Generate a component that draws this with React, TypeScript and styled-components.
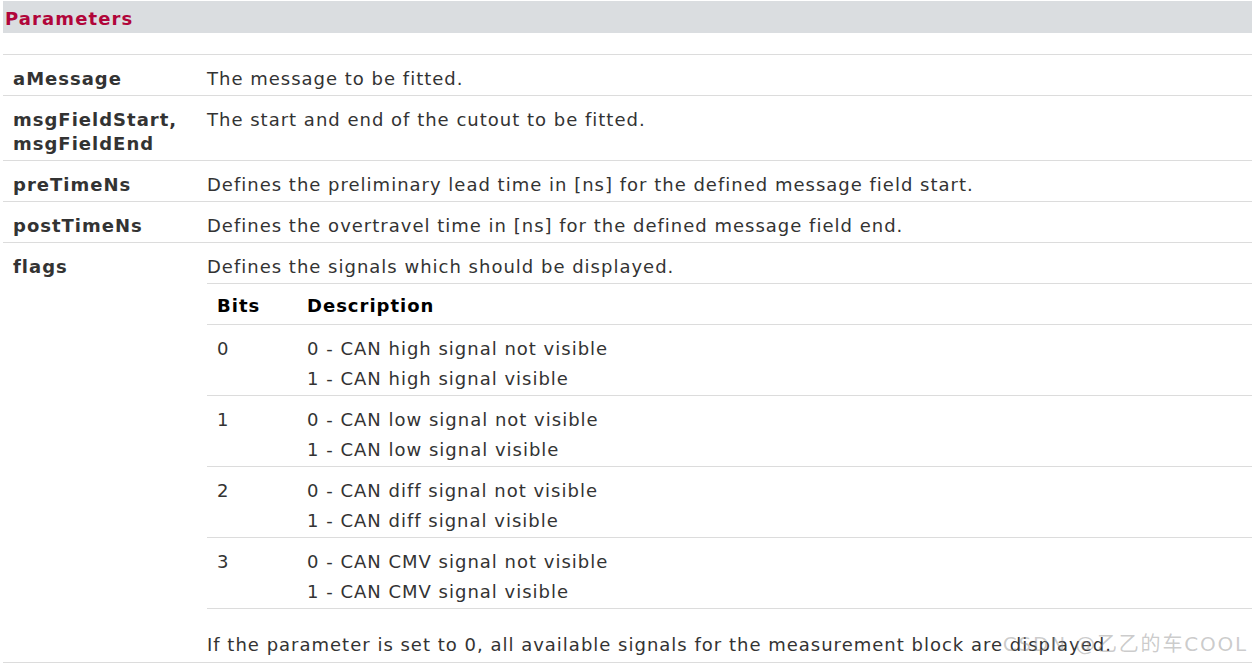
import React from "react";
import styled, { createGlobalStyle } from "styled-components";

const Global = createGlobalStyle`
  html, body { margin: 0; padding: 0; background: #fff; }
  body { font-family: "DejaVu Sans", Verdana, sans-serif; color: #333; overflow: hidden; }
`;

const Page = styled.div`
  position: relative;
  padding: 1px 0 0 3px;
  width: 1249px;
  height: 663px;
  overflow: hidden;
`;

const Header = styled.div`
  box-sizing: border-box;
  background: #dadde0;
  height: 32px;
  display: flex;
  align-items: center;
  padding: 2px 0 0 2px;
  font-size: 18px;
  letter-spacing: 1.1px;
  font-weight: bold;
  color: #b1053a;
`;

const Spacer = styled.div`
  height: 21px;
  border-bottom: 1px solid #dcdcdc;
`;

const Row = styled.div`
  display: grid;
  grid-template-columns: 204px 1fr;
  border-bottom: 1px solid #dcdcdc;
  font-size: 18px;
  letter-spacing: 1px;
  line-height: 24px;
`;

const Name = styled.div`
  padding: 12px 10px 4px;
  font-weight: bold;
  color: #333;
`;

const Desc = styled.div`
  padding: 12px 0 4px;
`;

const Para = styled.div<{ $top?: number; $bottom?: number }>`
  margin-top: ${(p) => p.$top ?? 0}px;
  margin-bottom: ${(p) => p.$bottom ?? 0}px;
`;

const Sub = styled.div`
  margin-top: 4px;
  border-top: 1px solid #dcdcdc;
`;

const SubRow = styled.div<{ $head?: boolean }>`
  display: grid;
  grid-template-columns: 90px 1fr;
  border-bottom: 1px solid #dcdcdc;
  padding: ${(p) => (p.$head ? "10px 0 6px" : "12px 0 4px")};
  font-weight: ${(p) => (p.$head ? "bold" : "normal")};
  color: ${(p) => (p.$head ? "#000" : "#333")};
`;

const SubCell = styled.div`
  padding-left: 10px;
  display: flex;
  flex-direction: column;
  gap: 6px;
`;

const Watermark = styled.div`
  position: absolute;
  right: 4px;
  bottom: 7px;
  font-family: "DejaVu Sans", "Noto Sans CJK SC", sans-serif;
  font-size: 20px;
  letter-spacing: 1.8px;
  color: rgba(140, 140, 140, 0.45);
  pointer-events: none;
`;

const params = [
  { name: ["aMessage"], desc: "The message to be fitted." },
  { name: ["msgFieldStart,", "msgFieldEnd"], desc: "The start and end of the cutout to be fitted." },
  { name: ["preTimeNs"], desc: "Defines the preliminary lead time in [ns] for the defined message field start." },
  { name: ["postTimeNs"], desc: "Defines the overtravel time in [ns] for the defined message field end." },
];

const bits = [
  ["0", "high"],
  ["1", "low"],
  ["2", "diff"],
  ["3", "CMV"],
];

export default function App() {
  return (
    <>
      <Global />
      <Page>
        <Header>Parameters</Header>
        <Spacer />
        {params.map((p) => (
          <Row key={p.name[0]}>
            <Name>
              {p.name.map((n) => (
                <div key={n}>{n}</div>
              ))}
            </Name>
            <Desc>{p.desc}</Desc>
          </Row>
        ))}
        <Row>
          <Name>flags</Name>
          <Desc>
            <Para>Defines the signals which should be displayed.</Para>
            <Sub>
              <SubRow $head>
                <SubCell>Bits</SubCell>
                <SubCell>Description</SubCell>
              </SubRow>
              {bits.map(([b, s]) => (
                <SubRow key={b}>
                  <SubCell>{b}</SubCell>
                  <SubCell>
                    <div>0 - CAN {s} signal not visible</div>
                    <div>1 - CAN {s} signal visible</div>
                  </SubCell>
                </SubRow>
              ))}
            </Sub>
            <Para $top={24} $bottom={1}>
              If the parameter is set to 0, all available signals for the measurement block are displayed.
            </Para>
          </Desc>
        </Row>
        <Watermark>CSDN @乙乙的车COOL</Watermark>
      </Page>
    </>
  );
}
